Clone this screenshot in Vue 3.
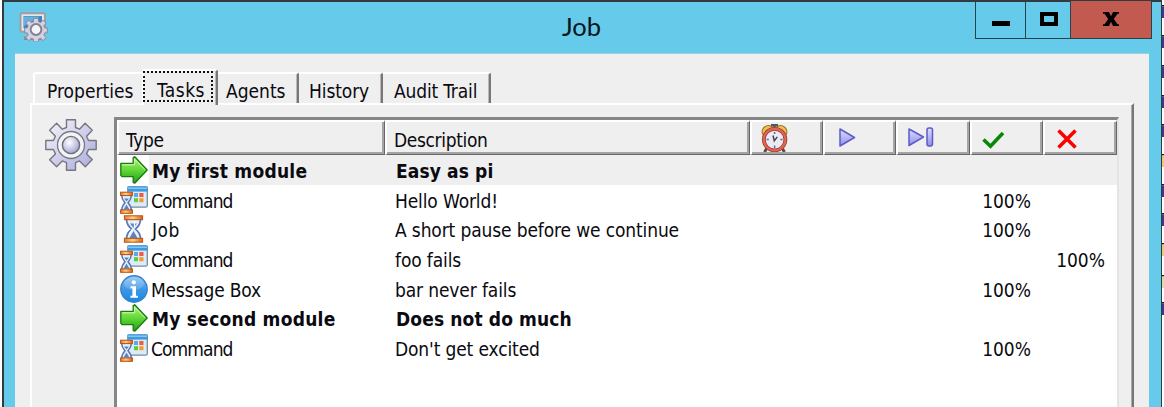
<script setup>
const tabs = [
  { label: 'Properties', cls: 't-props' },
  { label: 'Tasks', cls: 't-tasks' },
  { label: 'Agents', cls: 't-agents' },
  { label: 'History', cls: 't-history' },
  { label: 'Audit Trail', cls: 't-audit' },
]
const rows = [
  { icon: 'arrow', type: 'My first module', desc: 'Easy as pi', bold: true, selected: true },
  { icon: 'command', type: 'Command', desc: 'Hello World!', ok: '100%' },
  { icon: 'job', type: 'Job', desc: 'A short pause before we continue', ok: '100%' },
  { icon: 'command', type: 'Command', desc: 'foo fails', fail: '100%' },
  { icon: 'info', type: 'Message Box', desc: 'bar never fails', ok: '100%' },
  { icon: 'arrow', type: 'My second module', desc: 'Does not do much', bold: true },
  { icon: 'command', type: 'Command', desc: "Don't get excited", ok: '100%' },
]
const strip = [
  [5, 'n'], [35, 'n'], [65, 'n'], [95, 'n'], [124, 'n'], [154, 'o'], [184, 'n'],
  [213, 'n'], [243, 'o'], [275, 'g'], [302, 'n'],
]
const colors = { n: '#3a3a8c', o: '#f2c675', g: '#d6e0a4' }
</script>

<template>
  <div class="screen">
    <svg class="defs" width="0" height="0">
      <defs>
        <linearGradient id="gGear" x1="0" y1="0" x2="1" y2="1"><stop offset="0" stop-color="#f6f6fc" /><stop offset="1" stop-color="#a9a9dc" /></linearGradient>
        <radialGradient id="gHub" cx=".4" cy=".35" r=".65"><stop offset="0" stop-color="#fff" /><stop offset="1" stop-color="#a6a6d8" /></radialGradient>
        <linearGradient id="gGreen" x1="0" y1="0" x2="0" y2="1"><stop offset="0" stop-color="#b2f27c" /><stop offset=".5" stop-color="#62d83a" /><stop offset="1" stop-color="#1fa010" /></linearGradient>
        <linearGradient id="gInfo" x1="0" y1="0" x2="0" y2="1"><stop offset="0" stop-color="#8fc4f4" /><stop offset=".5" stop-color="#3f97e6" /><stop offset="1" stop-color="#1489e4" /></linearGradient>
        <linearGradient id="gPlay" x1="0" y1="0" x2="0" y2="1"><stop offset="0" stop-color="#dedefc" /><stop offset="1" stop-color="#8f8ff0" /></linearGradient>
        <linearGradient id="gCap" x1="0" y1="0" x2="1" y2="0"><stop offset="0" stop-color="#e8792c" /><stop offset=".45" stop-color="#ffd27c" /><stop offset="1" stop-color="#d8611c" /></linearGradient>
        <symbol id="gear" viewBox="0 0 52 52">
          <path d="M21.5 8.5V.8h9v7.7l4 1.700 5.600-6 7.200 7-5.700 6 1.900 4.300h7.700v9h-7.700l-1.900 4.400 5.700 5.700-7 7.200-5.800-5.900-4 1.800v7.500h-9v-7.500l-4.200-1.800-5.700 5.800-7-7 5.800-5.800-1.900-4.400H.8v-9h7.700l1.900-4.300-5.800-6 7-7 5.700 6z" fill="url(#gGear)" stroke="#77777f" stroke-width="1.4" stroke-linejoin="round" />
          <circle cx="26" cy="26" r="13.5" fill="#f3f3f5" stroke="#77777f" stroke-width="1.3" />
          <circle cx="26" cy="26" r="8.6" fill="url(#gHub)" stroke="#6e6e78" stroke-width="1.4" />
        </symbol>
        <symbol id="smallgear" viewBox="0 0 24 24">
          <path d="M9.5 4.2V.8h5v3.4l2.2.9 2.4-2.4 3 3-2.3 2.6.9 2.1h2.6v5h-2.6l-.9 2.2 2.3 2.5-3 3.1-2.4-2.4-2.2.9v2.5h-5v-2.5l-2.2-.9-2.4 2.4-3-3.1 2.3-2.5-.9-2.2H.7v-5h2.6l.9-2.1L1.9 5.7l3-3 2.4 2.4z" fill="#d2d2e4" stroke="#8c8898" stroke-width="1" stroke-linejoin="round" />
          <circle cx="12" cy="12" r="5.4" fill="#f4f4fa" stroke="#85818f" stroke-width="2" />
        </symbol>
        <symbol id="glass" viewBox="0 0 20 28">
          <path d="M3 4h14c0 5-2 7-5 10 3 3 5 5 5 10H3c0-5 2-7 5-10-3-3-5-5-5-10z" fill="#e4f0fc" stroke="#5876b4" stroke-width="1.7" />
          <path d="M6.5 8.5h7L10 13zM10 16l4 7H6z" fill="#5b83c4" />
          <path d="M9 14l-3 5M11 6v7" stroke="#fff" stroke-width="1.3" />
          <rect x=".8" y=".8" width="18.4" height="3.9" fill="url(#gCap)" stroke="#b65017" stroke-width="1" />
          <rect x=".8" y="23.3" width="18.4" height="3.9" fill="url(#gCap)" stroke="#b65017" stroke-width="1" />
        </symbol>
        <symbol id="arrow" viewBox="0 0 28 28">
          <path d="M.8 7.4h12.4V1.6l1.5-.9L27.2 14 14.7 27.2l-1.5-.8v-5.8H2L.8 19.4z" fill="url(#gGreen)" stroke="#187a10" stroke-width="1.3" stroke-linejoin="round" />
          <path d="M2.2 8.8h12.4V3.2L25 13.7" fill="none" stroke="#cdf8a8" stroke-width="1" />
        </symbol>
        <symbol id="command" viewBox="0 0 28 28">
          <rect x="8" y=".8" width="19.3" height="20.4" rx="1.5" fill="#dcebf5" stroke="#6f8ea6" stroke-width="1.3" />
          <path d="M7.4 .4h20.2v5.2H7.4z" fill="#3a9ae2" /><path d="M8 2.2h19" stroke="#8ccaf6" stroke-width="1.4" />
          <path d="M14 7h4v4h-4z" fill="#62a6e6" /><path d="M19.3 7h4.2v4h-4.2z" fill="#f25a45" />
          <path d="M14 12.2h4v4h-4z" fill="#57ce3c" /><path d="M19.3 12.2h4.2v4h-4.2z" fill="#f49b25" />
          <path d="M1.6 9h9.8c0 4-1.4 5.5-3.4 7.7 2 2.2 3.4 4 3.4 7.8H1.6c0-3.8 1.4-5.6 3.4-7.8C3 14.5 1.6 13 1.6 9z" fill="#e4f0fc" stroke="#5876b4" stroke-width="1.5" />
          <path d="M4 12.5h5l-2.500 3zM6.500 18.500l3 5h-6z" fill="#5b83c4" />
          <rect x=".6" y="6.2" width="11.8" height="3.4" fill="url(#gCap)" stroke="#b65017" stroke-width="1" />
          <rect x=".6" y="23.9" width="11.8" height="3.4" fill="url(#gCap)" stroke="#b65017" stroke-width="1" />
        </symbol>
        <symbol id="job" viewBox="0 0 28 28"><use href="#glass" x="3.5" y="0" width="20" height="28" /></symbol>
        <symbol id="info" viewBox="0 0 28 28">
          <circle cx="14" cy="14" r="13.2" fill="url(#gInfo)" stroke="#3d82c8" stroke-width="1.4" />
          <ellipse cx="14" cy="8.5" rx="10" ry="6.5" fill="#fff" opacity=".16" />
          <circle cx="13.8" cy="7.3" r="2.1" fill="#fff" />
          <path d="M10.5 11.2H16v9.500h2v2h-7.600v-2h2v-7.500h-1.900z" fill="#fff" />
        </symbol>
      </defs>
    </svg>

    <svg class="strip" width="3" height="407">
      <g v-for="([y, c]) in strip" :key="y">
        <rect x="0" :y="y" width="3" height="1.5" fill="#16161c" />
        <rect x="0" :y="y + 1.5" width="3" height="11.5" :fill="colors[c]" />
      </g>
    </svg>

    <div class="window">
      <header class="titlebar">
        <svg class="appicon" width="30" height="30" viewBox="0 0 30 30">
          <rect x="1.5" y="1.2" width="24.5" height="18.6" rx="1.5" fill="#e4e6ec" stroke="#a09e9e" stroke-width="2" />
          <path d="M4.5 4h18.500v12H4.500z" fill="#3788c0" /><path d="M5 4.5h16L5 14z" fill="#69b0dc" />
          <path d="M5 24.5h21V28H5z" fill="#8e8c90" />
          <use href="#smallgear" x="5" y="5.5" width="24" height="24" />
        </svg>
        <h1>Job</h1>
        <div class="controls">
          <span class="btn min"><svg width="18" height="5"><path d="M0 0h18v5H0z" /></svg></span>
          <span class="btn max"><svg width="18" height="14"><path d="M2 2h14v10H2z" fill="none" stroke="#000" stroke-width="4" /></svg></span>
          <span class="btn close"><svg width="16" height="14" viewBox="0 0 16 14"><path d="M0 0h6L8 4.2 10 0H16v1.800h-1.500L10.800 7l3.700 5.200H16V14h-6L8 9.800 6 14H0v-1.800h1.500L5.200 7 1.500 1.800H0z" /></svg></span>
        </div>
      </header>

      <main class="client">
        <nav class="tabs">
          <div v-for="t in tabs" :key="t.label" class="tab" :class="t.cls">
            <span>{{ t.label }}</span>
          </div>
        </nav>
        <section class="page">
          <svg class="biggear" width="52" height="52"><use href="#gear" width="52" height="52" /></svg>
          <div class="list">
            <div class="grid head">
              <div class="cell"><span class="lbl">Type</span></div>
              <div class="cell"><span class="lbl">Description</span></div>
              <div class="cell ic">
                <svg width="28" height="28" viewBox="0 0 28 28">
                  <path d="M6 24l-2.5 4M21 24l2.5 4" stroke="#5e4a48" stroke-width="3" />
                  <ellipse cx="6.5" cy="6.8" rx="5.8" ry="4.8" transform="rotate(-38 6.5 6.8)" fill="#f0c050" stroke="#98702c" stroke-width="1" />
                  <ellipse cx="20.5" cy="6.8" rx="5.8" ry="4.8" transform="rotate(38 20.5 6.8)" fill="#f0c050" stroke="#98702c" stroke-width="1" />
                  <path d="M10 1.3h7M13.5 1v4" stroke="#555" stroke-width="2.4" />
                  <circle cx="13.6" cy="15.6" r="10.8" fill="#ebeaf5" stroke="#a03a30" stroke-width="3.8" />
                  <circle cx="13.6" cy="15.6" r="10.8" fill="none" stroke="#e0664f" stroke-width="2.2" />
                  <path d="M13.6 8v2M13.6 21.5v2.4M5.6 15.6h2.2M19.4 15.6h2.2" stroke="#6565a0" stroke-width="1.5" />
                  <path d="M12 11.5l1.3 5.4 3-4" fill="none" stroke="#444" stroke-width="1.5" />
                </svg>
              </div>
              <div class="cell ic play"><svg width="17" height="19"><path d="M1 1l14.5 8.5L1 18z" fill="url(#gPlay)" stroke="#5c5cc4" stroke-width="1.5" stroke-linejoin="round" /></svg></div>
              <div class="cell ic next"><svg width="26" height="20"><path d="M1 2l14.5 8L1 18.5z" fill="url(#gPlay)" stroke="#5c5cc4" stroke-width="1.5" stroke-linejoin="round" /><rect x="19" y="1" width="5.5" height="18" rx="2" fill="url(#gPlay)" stroke="#5c5cc4" stroke-width="1.5" /></svg></div>
              <div class="cell ic ok"><svg width="23" height="18"><path d="M1.5 8.5l7 6.8L21 2" fill="none" stroke="#078807" stroke-width="3.6" /></svg></div>
              <div class="cell ic fail"><svg width="20" height="20"><path d="M1.5 1.5l17 17m0-17l-17 17" stroke="#f00" stroke-width="3.6" /></svg></div>
            </div>
            <div class="rows">
              <div v-for="(r, i) in rows" :key="i" class="grid row" :class="{ bold: r.bold, selected: r.selected }">
                <div class="type" :class="'is-' + r.icon"><svg width="28" height="28"><use :href="'#' + r.icon" width="28" height="28" /></svg><span>{{ r.type }}</span></div>
                <div class="desc">{{ r.desc }}</div>
                <div></div><div></div><div></div>
                <div class="pct">{{ r.ok }}</div>
                <div class="pct">{{ r.fail }}</div>
              </div>
            </div>
          </div>
        </section>
      </main>
    </div>
  </div>
</template>

<style>
body { margin: 0; overflow: hidden; }
</style>
<style scoped>
* { box-sizing: border-box; }
.screen { display: flex; position: relative; width: 1164px; height: 407px; background: #fff; overflow: hidden; padding-left: 2px; font-family: "DejaVu Sans Condensed", "DejaVu Sans", sans-serif; font-stretch: condensed; font-size: 19px; color: #0a0a10; }
.defs { position: absolute; }
svg { display: block; flex: none; }
.strip { position: absolute; right: 0; top: 0; }
.window { position: relative; width: 1160px; height: 407px; border: 2px solid #333b40; border-right-width: 1px; border-bottom: 0; background: #66caea; padding: 0 12px; display: flex; flex-direction: column; }
.titlebar { height: 51px; display: flex; position: relative; flex: none; }
.appicon { margin: 10px 0 0 3px; }
h1 { margin: 5px 0 0 513px; font: 400 25.5px/38px Lato, sans-serif; color: #08151c; }
.controls { position: absolute; right: -3px; top: -1px; height: 38px; display: flex; border: 1.5px solid #29434d; border-top: 0; width: 177px; }
.btn { display: flex; justify-content: center; border-right: 1px solid #29434d; }
.min { width: 50px; padding-top: 20px; }
.max { width: 45px; padding-top: 11px; padding-left: 1px; }
.close { flex: 1; background: #c25a50; border: 0; padding-top: 11px; }
.client { flex: 1; background: #efefef; margin-left: -1px; padding: 15px 15px 0; display: flex; flex-direction: column; border-top: 1px solid #a4cedb; }
.tabs { display: flex; align-items: flex-end; height: 34px; margin-left: 3px; position: relative; }
.tab { height: 31px; border-top: 2px solid #fff; position: relative; white-space: nowrap; border-right: 2px solid #777; box-shadow: inset -1px 0 #b8b8b8; border-top-right-radius: 3px; line-height: 34px; }
.t-props { width: 109px; border-left: 2px solid #fff; border-right: 0; box-shadow: none; padding-left: 12px; border-radius: 3px 0 0 0; letter-spacing: 0; }
.t-tasks { z-index: 1; width: 76px; height: 36px; margin-bottom: -2px; border-left: 2px solid #fff; padding-left: 13px; line-height: 38px; background: #efefef; letter-spacing: .5px; }
.t-tasks::after { content: ""; box-sizing: border-box; position: absolute; left: -1px; top: 0; width: 70px; height: 31px; border: 2px dotted #111; }
.t-agents { width: 81px; padding-left: 8px; }
.t-history { width: 84px; padding-left: 10px; letter-spacing: -.1px; }
.t-audit { width: 108px; padding-left: 11px; letter-spacing: -.15px; }
.page { flex: 1; border: 2px solid #fff; border-bottom: 0; border-right: 2px solid #777; box-shadow: inset -1px 0 #aaa; display: flex; padding: 12px 12px 0 13px; }
.biggear { margin: 2px 0 0 0; }
.list { margin-left: 17px; width: 1005px; background: #fff; border: 3px solid #868686; border-right: 2px solid #e4e4e4; border-bottom: 0; }
.grid { display: grid; grid-template-columns: 268px 365px 73px 73px 74px 73px 1fr; }
.head { height: 35px; background: #efefef; }
.cell { border: 2px solid #fff; border-right: 1px solid #666; border-bottom: 1px solid #666; box-shadow: inset -2px -2px #a4a4a4; display: flex; }
.lbl { margin-left: 7px; line-height: 36px; height: 30px; letter-spacing: -.35px; }
.ic { padding-left: 9px; padding-top: 2px; }
.play { padding: 6px 0 0 14px; }
.next { padding: 5px 0 0 10px; }
.ok { padding: 9px 0 0 10px; }
.fail { padding: 7px 0 0 12px; }
.row { height: 29.7px; line-height: 32px; white-space: nowrap; }
.selected { background: linear-gradient(to right, #fff 32px, #efefef 32px); }
.type { display: flex; padding: 1px 0 0 3px; line-height: 31px; letter-spacing: -.2px; }
.type span { margin-left: 3px; }
.type.is-command { letter-spacing: -.9px; }
.type.is-job { letter-spacing: .5px; }
.type.is-job span { margin-left: 4px; }
.desc { padding-left: 10px; letter-spacing: -.13px; }
.bold { font-weight: 700; }
.bold .type { letter-spacing: .25px; }
.bold .type span { margin-left: 4px; }
.bold .desc { padding-left: 11px; letter-spacing: .12px; }
.pct { text-align: right; padding-right: 12px; }
</style>
